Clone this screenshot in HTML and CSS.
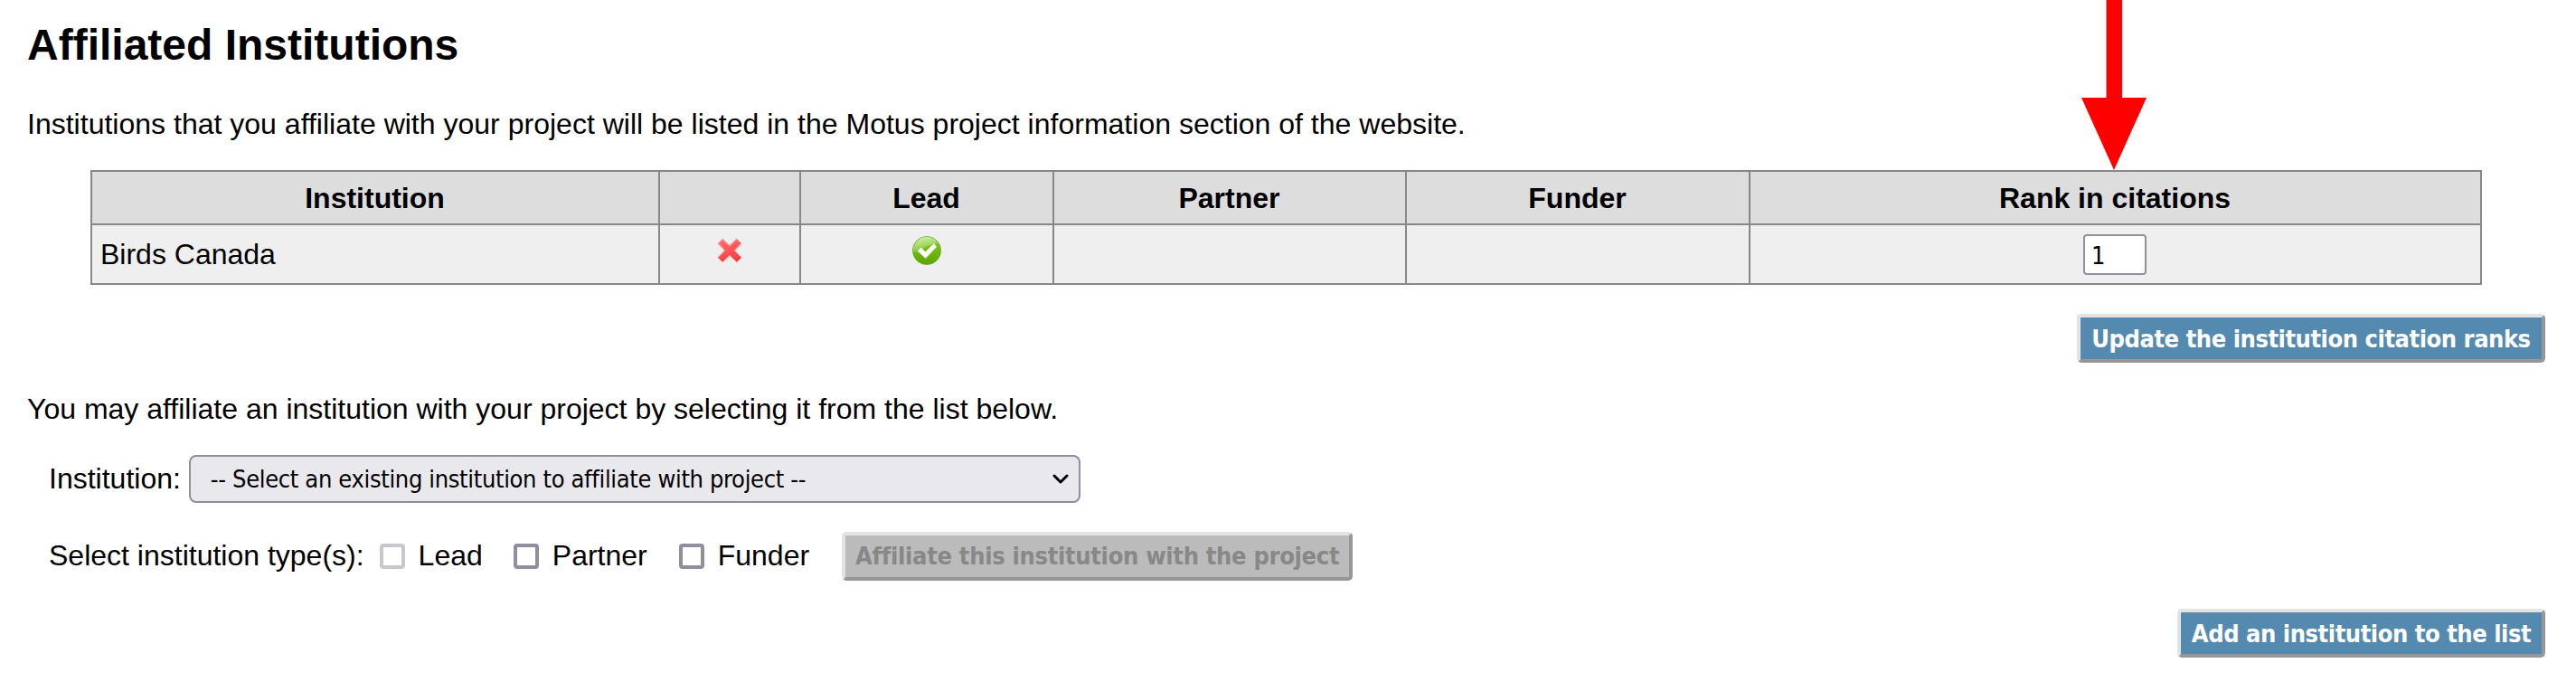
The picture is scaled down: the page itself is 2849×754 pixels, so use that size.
FILE: index.html
```html
<!DOCTYPE html>
<html lang="en">
<head>
<meta charset="utf-8">
<title>Affiliated Institutions</title>
<link rel="stylesheet" href="styles.css">
</head>
<body>
<main class="page">
  <h1 class="title">Affiliated Institutions</h1>
  <p class="intro">Institutions that you affiliate with your project will be listed in the Motus project information section of the website.</p>
  <table class="institutions">
    <colgroup><col class="c-name"><col class="c-remove"><col class="c-lead"><col class="c-partner"><col class="c-funder"><col class="c-rank"></colgroup>
    <thead>
      <tr><th>Institution</th><th></th><th>Lead</th><th>Partner</th><th>Funder</th><th>Rank in citations</th></tr>
    </thead>
    <tbody>
      <tr>
        <td class="name">Birds Canada</td>
        <td><svg class="icon" viewBox="0 0 32 32">
          <defs><linearGradient id="red" x1="0" y1="0" x2="0.3" y2="1"><stop offset="0" stop-color="#ff8585"/><stop offset="1" stop-color="#f03a3e"/></linearGradient></defs>
          <path d="M8.2 2.8 16 10.4 23.8 2.8 29.2 8.2 21.6 16 29.2 23.8 23.8 29 16 21.6 8.2 29 2.8 23.8 10.4 16 2.8 8.2Z" fill="url(#red)" stroke="#ffb9b9" stroke-width="1" stroke-linejoin="round"/>
          <path d="M8.2 8.2 23.8 23.8M23.8 8.2 8.2 23.8" stroke="#ff4f52" stroke-opacity=".6" stroke-width="3" stroke-linecap="round"/>
        </svg></td>
        <td><svg class="icon" viewBox="0 0 32 32">
          <defs>
            <linearGradient id="green" x1="0" y1="0" x2="0" y2="1"><stop offset="0" stop-color="#8fd33a"/><stop offset=".5" stop-color="#6fbd0c"/><stop offset="1" stop-color="#5aa500"/></linearGradient>
            <linearGradient id="gloss" x1="0.2" y1="0" x2="0.6" y2="1"><stop offset="0" stop-color="#fff" stop-opacity=".6"/><stop offset="1" stop-color="#fff" stop-opacity=".05"/></linearGradient>
          </defs>
          <circle cx="16" cy="16" r="15.6" fill="url(#green)" stroke="#6ba32c" stroke-width=".7"/>
          <path d="M1 18A15 15 0 0 1 28 7.2C23 9 18 9.500 13 13 9 15.500 6 19 1 18Z" fill="url(#gloss)"/>
          <path d="M5.600 16.400 9.600 12.200 14.400 17.200 24 7.800 27 12 14.600 25Z" fill="#fff" stroke="#5b9b15" stroke-opacity=".35" stroke-width=".8"/>
        </svg></td>
        <td></td>
        <td></td>
        <td class="rank-cell"><input class="rank" type="text" value="1"></td>
      </tr>
    </tbody>
  </table>
  <div class="actions"><button class="btn update" type="button">Update the institution citation ranks</button></div>
  <p class="hint">You may affiliate an institution with your project by selecting it from the list below.</p>
  <div class="field">
    <span class="field-label">Institution:</span>
    <div class="select"><span class="select-text">-- Select an existing institution to affiliate with project --</span>
      <svg class="chevron" viewBox="0 0 18 12"><path d="M2 2 9 9 16 2" fill="none" stroke="#000" stroke-width="3" stroke-linecap="round" stroke-linejoin="round"/></svg>
    </div>
  </div>
  <div class="types">
    <span class="types-label">Select institution type(s):</span>
    <label class="option lead"><input type="checkbox" class="check" disabled><span>Lead</span></label>
    <label class="option partner"><input type="checkbox" class="check"><span>Partner</span></label>
    <label class="option funder"><input type="checkbox" class="check"><span>Funder</span></label>
    <button class="btn affiliate" type="button" disabled>Affiliate this institution with the project</button>
  </div>
  <div class="actions bottom"><button class="btn add" type="button">Add an institution to the list</button></div>
  <svg class="arrow" viewBox="0 0 72 188"><path d="M27.500 0H45V108H72L36 188 0 108H27.500Z" fill="#f00"/></svg>
</main>
</body>
</html>
```
FILE: styles.css
```css
* { box-sizing: border-box; }
body {
  margin: 0;
  background: #fff;
  color: #000;
  font: 32px/40px "Liberation Sans", Arial, sans-serif;
}
.page {
  position: relative;
  height: 754px;
  padding: 22px 34px 0 30px;
  overflow: hidden;
  white-space: nowrap;
}
.title { margin: 0; font-size: 48px; line-height: 56px; }
.intro { margin: 39px 0 31px; letter-spacing: .01px; }
.institutions {
  width: 2645px;
  margin-left: 70px;
  border-collapse: collapse;
  table-layout: fixed;
}
.c-name { width: 628px; }
.c-remove { width: 156px; }
.c-lead { width: 280px; }
.c-partner { width: 390px; }
.c-funder { width: 380px; }
.c-rank { width: 809px; }
th, td { border: 2px solid #888; padding: 0 10px; text-align: center; }
th { height: 59px; background: #ddd; padding: 0 11px 0 10px; }
td { height: 66px; background: #efefef; }
td.name { padding-left: 9px; text-align: left; }
td.rank-cell { padding-right: 11px; }
.icon { display: block; width: 32px; height: 32px; margin: 0 auto 8px; }
.rank {
  display: block;
  width: 70px;
  height: 45px;
  margin: 0 auto;
  padding: 2px 7px 0;
  border: 2px solid #8f8f9d;
  border-radius: 4px;
  background: #fff;
  font: 27px "DejaVu Sans Condensed", "DejaVu Sans", sans-serif;
}
.actions { display: flex; justify-content: flex-end; margin-top: 32px; }
.btn {
  height: 54px;
  padding: 0;
  border: 4px solid;
  border-color: #e3e3e3 #979797 #979797 #e3e3e3;
  border-radius: 5px;
  background: #548ab0;
  color: #fff;
  font: bold 27px "DejaVu Sans Condensed", "DejaVu Sans", sans-serif;
  white-space: nowrap;
}
.update { width: 518px; letter-spacing: -.45px; }
.add { width: 407px; letter-spacing: -.45px; }
.hint { margin: 31px 0; }
.field { display: flex; align-items: center; margin-left: 24px; height: 53px; }
.field-label, .types-label, .option span { margin-top: -1px; }
.select {
  display: flex;
  align-items: center;
  justify-content: space-between;
  width: 986px;
  height: 53px;
  margin-left: 9px;
  padding: 0 11px 0 22px;
  border: 2px solid #8f8f9d;
  border-radius: 8px;
  background: #e9e9ed;
  font: 27px "DejaVu Sans Condensed", "DejaVu Sans", sans-serif;
}
.select-text { letter-spacing: -.34px; }
.chevron { width: 18px; height: 12px; }
.types { display: flex; align-items: center; height: 53px; margin: 32px 0 0 24px; }
.option { display: flex; align-items: center; gap: 15px; }
.lead { margin-left: 17px; }
.partner, .funder { margin-left: 35px; }
.partner { margin-left: 34px; }
.check {
  appearance: none;
  width: 28px;
  height: 28px;
  margin: 0;
  border: 4px solid #8f8f9d;
  border-radius: 4px;
  background: #fff;
}
.check:disabled { border-color: #c7c7ce; }
.affiliate { width: 565px; margin-left: 36px; background: #bbb; color: #888; letter-spacing: -.3px; }
.arrow { position: absolute; left: 2301.500px; top: 0; width: 72px; height: 188px; }
```
